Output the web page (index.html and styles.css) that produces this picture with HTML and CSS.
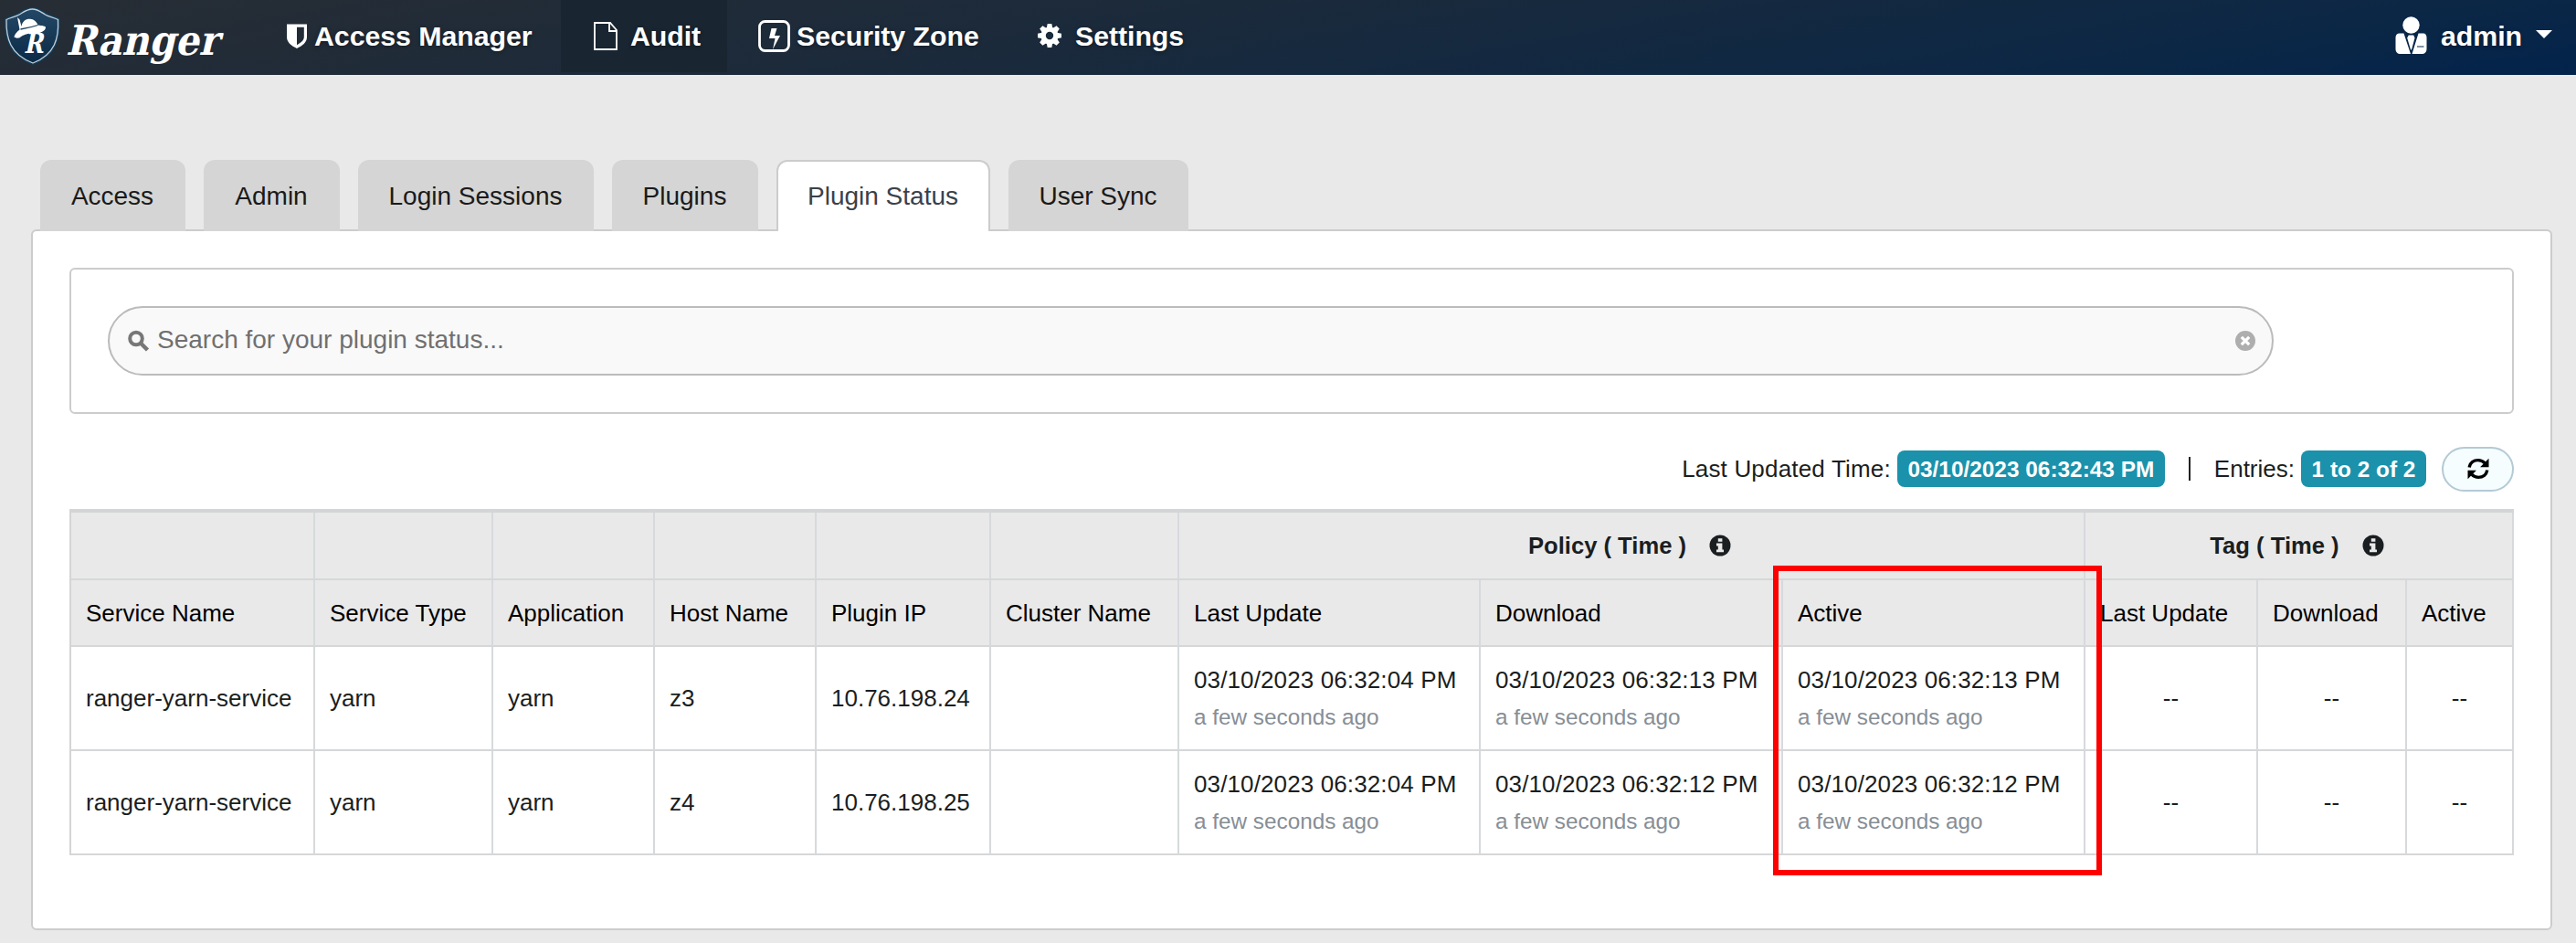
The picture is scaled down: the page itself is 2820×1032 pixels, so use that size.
FILE: index.html
```
<!DOCTYPE html>
<html lang="en">
<head>
<meta charset="utf-8">
<title>Ranger</title>
<link rel="stylesheet" href="styles.css">
</head>
<body>
<svg width="0" height="0" class="defs">
  <symbol id="info" viewBox="0 0 24 24"><circle cx="12" cy="12" r="11.5" fill="#1a1e21"/><path d="M9.8 4.2h4.6v3.6H9.8zM8 9.6h6.4v6.8H16v2.8H8v-2.8h1.8v-4H8z" fill="#e9e9e9"/></symbol>
</svg>
<header class="topbar">
  <a class="brand">
    <svg width="278" height="82" viewBox="0 0 278 82">
      <defs><linearGradient id="sh" x1="0" y1="0" x2="0" y2="1"><stop offset="0" stop-color="#234766"/><stop offset="1" stop-color="#0b2b47"/></linearGradient></defs>
      <path d="M35.500 10c6 0 9 3 14 6 4 2.500 9 3 14 5.500 1 20-3 38-27.500 47.500C11 59.500 6.500 41.500 7 21.500c5-2.500 10-3 14-5.500 5-3 8.500-6 14.500-6z" fill="none" stroke="#12405f" stroke-width="4"/>
      <path d="M35.500 10c6 0 9 3 14 6 4 2.500 9 3 14 5.500 1 20-3 38-27.500 47.500C11 59.500 6.500 41.500 7 21.500c5-2.500 10-3 14-5.500 5-3 8.500-6 14.500-6z" fill="url(#sh)" stroke="#c3cfd8" stroke-width="1.300"/>
      <path d="M19 19l2.500 2.500 2 7.500c1-6 5-8.500 9.500-8.200 4 .2 7 2.700 8.500 6.700 5 .5 8.500 1 8.500 2.500 0 3.500-6 7-12 6.500-7-.5-12 1-17 5-2.500.3-5 .2-5.500-1 .5-3 3-6 6-8z" fill="#fff"/>
      <path d="M22.500 32c6-1 13-2.500 19-4.500" stroke="#1a3e5b" stroke-width="1.300" fill="none"/>
      <g transform="translate(26 58) skewX(-12)"><text class="mark" textLength="21" lengthAdjust="spacingAndGlyphs">R</text></g>
      <g transform="translate(72 60) skewX(-13)"><text class="word" textLength="167" lengthAdjust="spacingAndGlyphs">Ranger</text></g>
    </svg>
  </a>
  <nav class="nav">
    <a class="n1"><svg width="22" height="27" viewBox="0 0 22 27"><path d="M0 .5h22v14c0 6-5 9.500-11 12.500C5 24 0 20.500 0 14.500zM11 3.800v19.400c4.500-2.500 7.800-5 7.800-8.700V3.800z" fill="#fff" fill-rule="evenodd"/></svg><span>Access Manager</span></a>
    <a class="n2 on"><svg width="26" height="31" viewBox="0 0 26 31"><path d="M1 1h17l7 8v21H1zM17 1v9h8" fill="none" stroke="#fff" stroke-width="1.800"/></svg><span>Audit</span></a>
    <a class="n3"><svg width="35" height="35" viewBox="0 0 35 35"><rect x="1.500" y="1.500" width="32" height="32" rx="6" fill="none" stroke="#fff" stroke-width="2.800"/><path d="M14.500 9h6l-2.500 8h6L16 32l2.500-12h-6.500z" fill="#fff"/></svg><span>Security Zone</span></a>
    <a class="n4"><svg width="26" height="26" viewBox="-13 -13 26 26"><g fill="#fff"><path fill-rule="evenodd" d="M0-9.500a9.500 9.500 0 1 0 0 19 9.500 9.500 0 0 0 0-19zM0-4.200a4.200 4.200 0 1 1 0 8.400 4.200 4.200 0 0 1 0-8.400z"/><g id="t"><path d="M-2.300-13h4.600l1 5h-6.600zM-2.300 13h4.600l1-5h-6.600z"/></g><use href="#t" transform="rotate(45)"/><use href="#t" transform="rotate(90)"/><use href="#t" transform="rotate(135)"/></g></svg><span>Settings</span></a>
  </nav>
  <a class="user">
    <svg width="36" height="42" viewBox="0 0 36 42"><g fill="#fff"><circle cx="17.500" cy="9.500" r="9.200"/><path d="M5 18.500h4.500L17 41H6c-3.500 0-5.500-2-5.500-5.500V23c0-2.500 1.500-4.500 4.500-4.500zM31 18.500h-5.500L18.500 41H29c3.500 0 5.500-2 5.500-5.500V23c0-2.500-1.500-4.500-3.500-4.500z"/><path d="M14.800 20.500h5.400l1.300 3-3.500 13h-1l-3.800-13z"/></g><path d="M24 33h7.500" stroke="#0a2745" stroke-width="1"/></svg>
    <span>admin</span>
    <svg class="caret" width="18" height="9" viewBox="0 0 18 9"><path d="M0 0h18L9 9z" fill="#fff"/></svg>
  </a>
</header>
<main class="content">
  <div class="tabs">
    <a class="tab t1">Access</a><a class="tab t2">Admin</a><a class="tab t3">Login Sessions</a><a class="tab t4">Plugins</a><a class="tab t5 active">Plugin Status</a><a class="tab t6">User Sync</a>
  </div>
  <section class="panel">
    <div class="filter">
      <div class="search">
        <svg width="24" height="24" viewBox="0 0 24 24" fill="none" stroke="#777"><circle cx="9" cy="9.500" r="6.800" stroke-width="4"/><path d="M14 14.500l7.500 7.500" stroke-width="4.500"/></svg>
        <span class="ph">Search for your plugin status...</span>
        <svg width="22" height="22" viewBox="0 0 22 22"><circle cx="11" cy="11" r="11" fill="#aeaeae"/><path d="M6.800 6.800l8.400 8.400M15.200 6.800l-8.400 8.400" stroke="#fff" stroke-width="3.200"/></svg>
      </div>
    </div>
    <div class="meta">
      <span class="lbl lu">Last Updated Time:</span><span class="badge b1">03/10/2023 06:32:43 PM</span><span class="sep"></span><span class="lbl">Entries:</span><span class="badge b2">1 to 2 of 2</span>
      <button class="refresh"><svg width="24" height="24" viewBox="0 0 24 24"><g id="ar"><path d="M2.200 10.500C3 5.500 7 2.600 11.800 2.600c3.200 0 5.500 1.200 7.400 3.200" fill="none" stroke="#000" stroke-width="3.400"/><path d="M23.500.8v9.400h-9.400z"/></g><use href="#ar" transform="rotate(180 12 12)"/></svg></button>
    </div>
    <div class="tablewrap">
    <table>
      <colgroup><col style="width:267px"><col style="width:195px"><col style="width:177px"><col style="width:177px"><col style="width:191px"><col style="width:206px"><col style="width:330px"><col style="width:331px"><col style="width:331px"><col style="width:189px"><col style="width:163px"><col style="width:117px"></colgroup>
      <thead>
        <tr class="h1"><th></th><th></th><th></th><th></th><th></th><th></th><th colspan="3"><span class="grp">Policy ( Time )<svg width="24" height="24"><use href="#info"/></svg></span></th><th colspan="3"><span class="grp">Tag ( Time )<svg width="24" height="24"><use href="#info"/></svg></span></th></tr>
        <tr class="h2"><th>Service Name</th><th>Service Type</th><th>Application</th><th>Host Name</th><th>Plugin IP</th><th>Cluster Name</th><th>Last Update</th><th>Download</th><th>Active</th><th>Last Update</th><th>Download</th><th>Active</th></tr>
      </thead>
      <tbody>
        <tr><td>ranger-yarn-service</td><td>yarn</td><td>yarn</td><td>z3</td><td>10.76.198.24</td><td></td><td><span class="date">03/10/2023 06:32:04 PM</span><small>a few seconds ago</small></td><td><span class="date">03/10/2023 06:32:13 PM</span><small>a few seconds ago</small></td><td><span class="date">03/10/2023 06:32:13 PM</span><small>a few seconds ago</small></td><td class="c">--</td><td class="c">--</td><td class="c">--</td></tr>
        <tr><td>ranger-yarn-service</td><td>yarn</td><td>yarn</td><td>z4</td><td>10.76.198.25</td><td></td><td><span class="date">03/10/2023 06:32:04 PM</span><small>a few seconds ago</small></td><td><span class="date">03/10/2023 06:32:12 PM</span><small>a few seconds ago</small></td><td><span class="date">03/10/2023 06:32:12 PM</span><small>a few seconds ago</small></td><td class="c">--</td><td class="c">--</td><td class="c">--</td></tr>
      </tbody>
    </table>
    <div class="highlight"></div>
    </div>
  </section>
</main>
</body>
</html>
```
FILE: styles.css
```
* { box-sizing: border-box; }
body { margin: 0; height: 1032px; background: #e9e9e9; font-family: "Liberation Sans", Arial, sans-serif; font-size: 26px; color: #1a1e21; }
.defs { position: absolute; }
svg { display: block; flex: none; }
.topbar { height: 82px; display: flex; background: linear-gradient(170deg, #272d34 0%, #1b2a3b 42%, #0b2746 84%, #03234b 100%); }
.brand { width: 278px; }
.mark { font: bold 31px "DejaVu Serif", serif; fill: #fff; }
.word { font: bold 45px "DejaVu Serif", serif; fill: #fff; }
.nav { display: flex; height: 79px; flex: 1; }
.nav a, .user { display: flex; align-items: center; color: #fff; font-weight: bold; font-size: 30.3px; white-space: nowrap; padding-bottom: 1px; text-shadow: 0 1px 4px rgba(0,0,0,.4); }
.nav span, .user span { padding-top: 2px; letter-spacing: -0.05px; }
.nav .n1 { width: 336px; padding-left: 36px; gap: 8px; }
.nav .on { width: 182px; padding-left: 36px; gap: 14px; background: #192530; }
.nav .n3 { padding-left: 34px; gap: 7px; width: 308px; }
.nav .n4 { padding-left: 32px; gap: 15px; }
.user { height: 79px; width: 198px; gap: 14px; }
.caret { margin-left: 1px; margin-top: -3px; }
.content { padding: 93px 26px 0 34px; }
.tabs { display: flex; gap: 20px; padding-left: 10px; height: 78px; margin-bottom: -2px; position: relative; }
.tab { height: 78px; background: #d5d5d5; border-radius: 12px 12px 0 0; font-size: 28px; line-height: 79px; text-align: center; text-indent: -1px; color: #1a1a1a; white-space: nowrap; }
.t1 { width: 159px; } .t2 { width: 149px; } .t3 { width: 258px; } .t4 { width: 160px; } .t5 { width: 234px; } .t6 { width: 197px; }
.tab.active { background: #fff; border: 2px solid #ccc; border-bottom: 0; line-height: 75px; color: #3b4148; }
.panel { height: 767px; border: 2px solid #ccc; border-radius: 6px; background: #fff; padding: 40px; }
.filter { height: 160px; border: 2px solid #ccc; border-radius: 6px; padding: 40px; }
.search { width: 2371px; height: 76px; border: 2px solid #bbb; border-radius: 38px; background: #f9f9f9; display: flex; align-items: center; padding: 0 18px 0 20px; }
.ph { flex: 1; margin-left: 8px; padding-bottom: 2px; font-size: 28px; color: #707070; }
.meta { display: flex; align-items: center; justify-content: flex-end; height: 50px; margin-top: 35px; }
.lbl { white-space: nowrap; }
.lu { letter-spacing: 0.18px; }
.badge { margin-left: 7px; height: 40px; border-radius: 8px; background: #1b91ab; color: #fff; font-weight: bold; font-size: 24.4px; line-height: 41px; text-align: center; white-space: nowrap; }
.b1 { width: 293px; } .b2 { width: 137px; }
.sep { width: 2px; height: 26px; background: #222; margin: 0 26px; }
.refresh { width: 79px; height: 49px; margin-left: 17px; border: 2px solid #b4cad4; border-radius: 25px; background: #f5fdff; padding: 0; display: flex; align-items: center; justify-content: center; }
.tablewrap { position: relative; margin-top: 19px; }
table { width: 2676px; border-collapse: separate; border-spacing: 0; table-layout: fixed; border: 2px solid #d3d5d6; border-top-width: 4px; border-right: 0; border-bottom: 0; }
th, td { padding: 0 0 0 16px; text-align: left; font-weight: normal; border-right: 2px solid #d6dadd; border-bottom: 2px solid #d5d7d8; white-space: nowrap; }
th { background: #e9e9e9; color: #000; }
.h1 th { height: 74px; font-weight: bold; font-size: 25.6px; color: #1a1e21; padding: 0; }
.grp { display: flex; align-items: center; justify-content: center; gap: 25px; padding-right: 4px; }
.h2 th { height: 73px; padding-top: 2px; }
td { height: 114px; }
.date { display: block; letter-spacing: 0.12px; }
small { display: block; font-size: 24.3px; line-height: 30px; color: #868e96; margin-top: 10px; }
td.c { text-align: center; padding: 0; }
.highlight { position: absolute; left: 1865px; top: 62px; width: 360px; height: 339px; border: 6px solid #f00; }
```
